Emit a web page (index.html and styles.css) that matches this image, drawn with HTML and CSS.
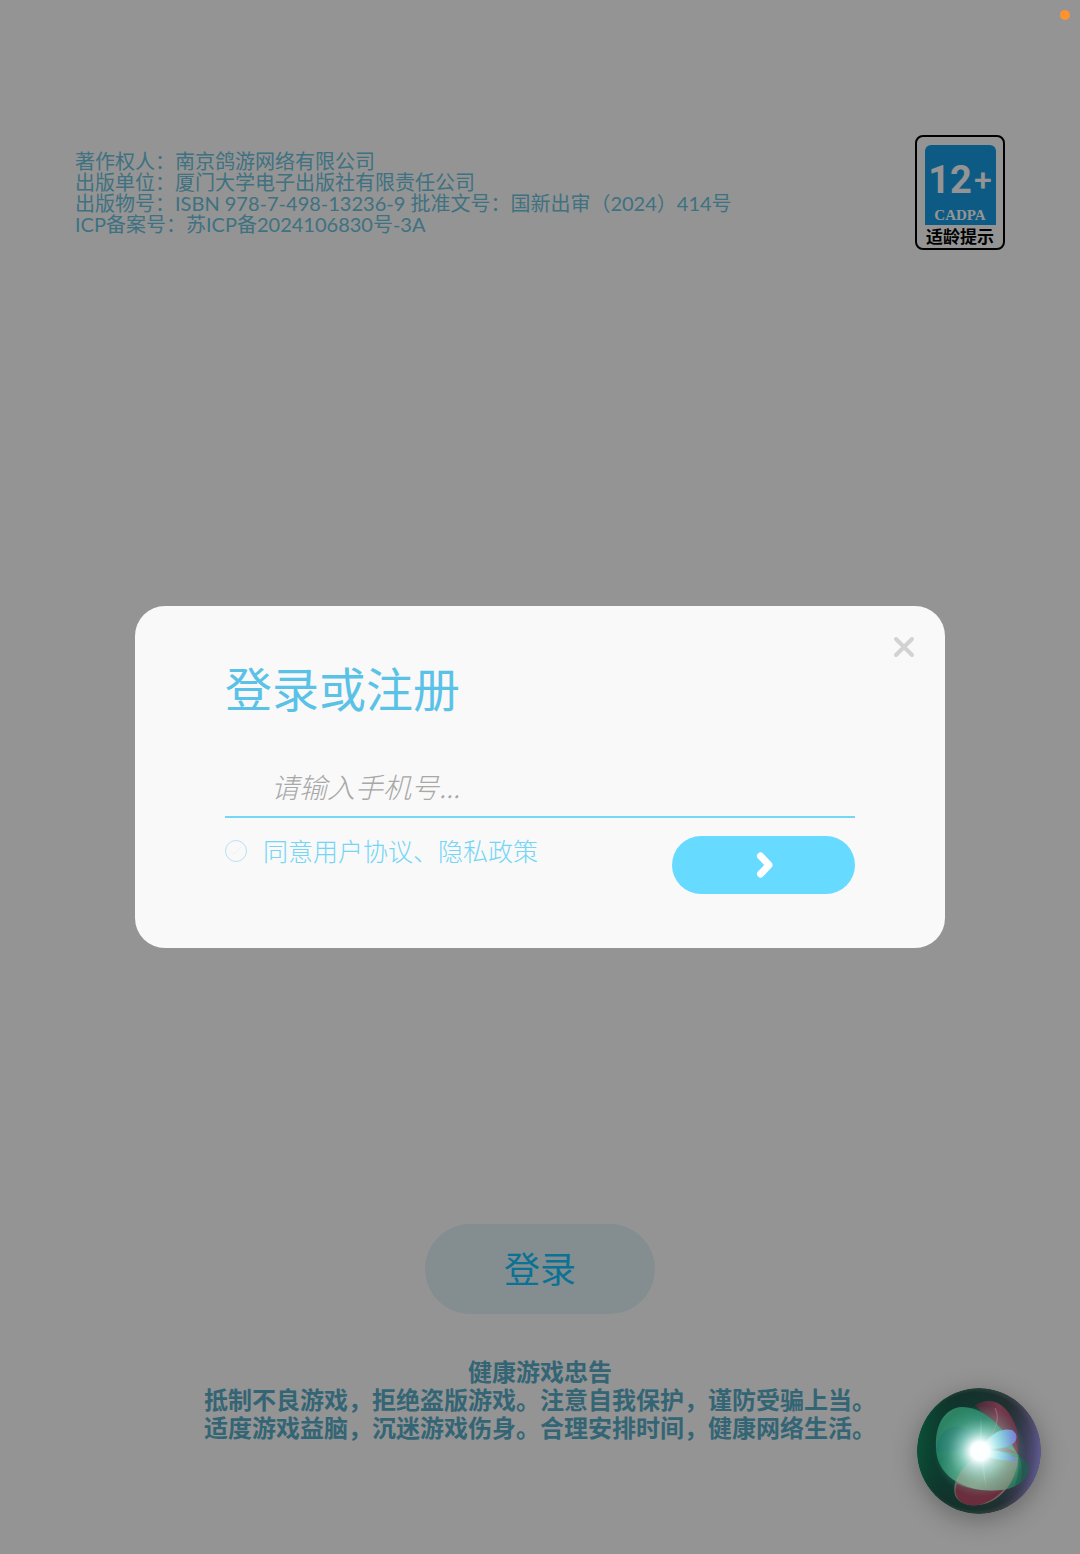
FILE: index.html
```html
<!DOCTYPE html>
<html lang="zh-CN">
<head>
    <meta charset="UTF-8">
    <meta name="viewport" content="width=device-width, initial-scale=1.0">
    <title>登录或注册</title>
    <link rel="stylesheet" href="styles.css">
</head>
<body>
    <div class="page">
        <header class="top">
            <p class="copyright">
                著作权人：南京鸽游网络有限公司<br>
                出版单位：厦门大学电子出版社有限责任公司<br>
                出版物号：ISBN 978-7-498-13236-9 批准文号：国新出审（2024）414号<br>
                ICP备案号：苏ICP备2024106830号-3A
            </p>
            <button type="button" class="age-badge">
                <span class="age-box">
                    <span class="age-number">12<span class="age-plus">+</span></span>
                    <span class="age-org">CADPA</span>
                </span>
                <span class="age-label">适龄提示</span>
            </button>
        </header>

        <footer class="bottom">
            <button type="button" class="login-btn">登录</button>
            <p class="notice">
                健康游戏忠告<br>
                抵制不良游戏，拒绝盗版游戏。注意自我保护，谨防受骗上当。<br>
                适度游戏益脑，沉迷游戏伤身。合理安排时间，健康网络生活。
            </p>
        </footer>
    </div>

    <div class="overlay">
        <form class="dialog" role="dialog" aria-labelledby="dialogTitle">
            <button type="button" class="close-btn" aria-label="关闭">
                <svg width="22" height="22" viewBox="0 0 22 22">
                    <path d="M3 3L19 19M19 3L3 19" fill="none" stroke="#d2d2d2" stroke-width="4" stroke-linecap="round"/>
                </svg>
            </button>
            <h1 id="dialogTitle">登录或注册</h1>
            <input type="tel" id="phone" class="phone" placeholder="请输入手机号..." aria-label="手机号">
            <div class="form-row">
                <div class="agree">
                    <span class="check">
                        <input type="checkbox" id="agree">
                        <svg width="12" height="10" viewBox="0 0 12 10">
                            <path d="M1 5L4 8L11 1" fill="none" stroke="#edf2f4" stroke-width="1"/>
                        </svg>
                    </span>
                    <label for="agree">同意用户协议、隐私政策</label>
                </div>
                <button type="submit" class="next-btn" aria-label="下一步">
                    <svg width="18" height="28" viewBox="0 0 18 28">
                        <path d="M5.5 5L14 14L5.5 23" fill="none" stroke="#fff" stroke-width="7" stroke-linecap="round" stroke-linejoin="round"/>
                    </svg>
                </button>
            </div>
        </form>
    </div>

    <span class="mic-dot"></span>

    <!-- voice assistant orb -->
    <svg class="orb" width="124" height="126" viewBox="0 0 124 126">
        <defs>
            <radialGradient id="ball" cx="48%" cy="50%" r="54%">
                <stop offset="0" stop-color="#175846"/>
                <stop offset="0.6" stop-color="#0f382f"/>
                <stop offset="0.86" stop-color="#14302a"/>
                <stop offset="1" stop-color="#42584e"/>
            </radialGradient>
            <linearGradient id="rim" x1="0" y1="0.4" x2="1" y2="0.5">
                <stop offset="0" stop-color="#075a3a" stop-opacity="0.8"/>
                <stop offset="0.3" stop-color="#083a2b" stop-opacity="0.1"/>
                <stop offset="0.7" stop-color="#4a2c45" stop-opacity="0.25"/>
                <stop offset="1" stop-color="#625b98" stop-opacity="0.9"/>
            </linearGradient>
            <linearGradient id="green" x1="0" y1="0" x2="1" y2="1">
                <stop offset="0" stop-color="#3a916c"/>
                <stop offset="0.35" stop-color="#1d7c5e"/>
                <stop offset="0.7" stop-color="#5cae85"/>
                <stop offset="1" stop-color="#1c6650"/>
            </linearGradient>
            <linearGradient id="red" x1="0" y1="0" x2="1" y2="0.4">
                <stop offset="0" stop-color="#4a2634"/>
                <stop offset="0.5" stop-color="#853a51"/>
                <stop offset="1" stop-color="#6f2d43"/>
            </linearGradient>
            <radialGradient id="glow">
                <stop offset="0" stop-color="#fff"/>
                <stop offset="0.2" stop-color="#faffff"/>
                <stop offset="0.42" stop-color="#bdf3ee" stop-opacity="0.65"/>
                <stop offset="0.7" stop-color="#8fdccb" stop-opacity="0.25"/>
                <stop offset="1" stop-color="#6ad0b8" stop-opacity="0"/>
            </radialGradient>
            <linearGradient id="blue" x1="0" y1="0" x2="1" y2="0">
                <stop offset="0" stop-color="#d5ffff"/>
                <stop offset="0.6" stop-color="#75b4de"/>
                <stop offset="1" stop-color="#7770d8"/>
            </linearGradient>
        </defs>
        <ellipse cx="62" cy="63" rx="62" ry="63" fill="url(#ball)"/>
        <ellipse cx="62" cy="63" rx="62" ry="63" fill="url(#rim)"/>
        <path d="M58 17C80 4 96 24 101 46C103 62 101 80 91 94C79 80 77 60 72 48C69 36 66 23 58 17Z" fill="url(#red)" opacity="0.85"/>
        <path d="M19 59C18 36 28 20 45 19C65 19 82 35 93 53C103 66 108 80 103 94C96 102 81 104 64 102C39 98 19 84 19 59Z" fill="url(#green)" opacity="0.92"/>
        <path d="M83 37C97 45 101 55 101 68C99 64 94 54 83 37Z" fill="#8a3850" opacity="0.8"/>
        <path d="M101 68C108 71 112 75 112 83C109 91 105 96 98 98C101 88 102 79 101 68Z" fill="#1d624d" opacity="0.7"/>
        <path d="M61 65C46 79 34 92 38 107C43 119 61 120 75 113C92 104 100 86 101 70C88 66 73 64 61 65Z" fill="#b9928a" opacity="0.5"/>
        <path d="M40 96C34 110 47 120 62 117C73 114 81 108 86 102C70 104 54 102 40 96Z" fill="#6b2538" opacity="0.85"/>
        <path d="M29 42C42 32 57 45 66 58C48 62 29 62 20 65C19 55 23 46 29 42Z" fill="#176b68" opacity="0.45"/>
        <path d="M78 20C83 31 80 42 65 58" fill="none" stroke="#d58b96" stroke-width="1" opacity="0.5"/>
        <path d="M62 62C72 48 82 39 95 42C103 47 101 58 84 60Z" fill="url(#blue)"/>
        <path d="M66 62C80 62 93 64 101 73C88 73 77 71 66 68Z" fill="url(#blue)"/>
        <path d="M78 62C88 59 94 60 100 66Z" fill="#9b6478"/>
        <path d="M64 28L66 60L69 100L62 64Z" fill="#fff" opacity="0.2"/>
        <circle cx="63" cy="63" r="46" fill="url(#glow)"/>
    </svg>
</body>
</html>
```

FILE: styles.css
```css
* {
    box-sizing: border-box;
}

body {
    margin: 0;
    font-family: Lato, "Noto Sans CJK SC", sans-serif;
    background-color: #fff;
}

button {
    border: none;
    padding: 0;
    font-family: inherit;
    cursor: pointer;
}

.page {
    display: flex;
    flex-direction: column;
    justify-content: space-between;
    min-height: 100vh;
    padding: 135px 75px 112px;
}

.top {
    display: flex;
    justify-content: space-between;
    align-items: flex-start;
}

.copyright {
    margin: 16px 0 0;
    font-size: 20px;
    line-height: 21px;
    color: #6cc4de;
}

.age-badge {
    display: flex;
    flex-direction: column;
    align-items: center;
    width: 90px;
    height: 115px;
    padding: 8px 7px 0;
    background-color: #fff;
    border: 2px solid #000;
    border-radius: 8px;
}

.age-box {
    display: flex;
    flex-direction: column;
    align-items: center;
    width: 71px;
    height: 80px;
    padding-top: 14px;
    background-color: #189ee4;
    border-radius: 6px 6px 0 0;
    color: #fff;
}

.age-number {
    display: flex;
    gap: 2px;
    font-family: Roboto, sans-serif;
    font-size: 38px;
    font-weight: bold;
    line-height: 42px;
}

.age-plus {
    font-size: 32px;
    font-weight: 500;
}

.age-org {
    font-family: "Liberation Serif", serif;
    font-size: 15px;
    font-weight: bold;
    line-height: 28px;
}

.age-label {
    font-size: 17px;
    font-weight: bold;
    line-height: 24px;
    color: #000;
    white-space: nowrap;
}

.bottom {
    display: flex;
    flex-direction: column;
    align-items: center;
    gap: 44px;
}

.login-btn {
    width: 230px;
    height: 90px;
    padding-bottom: 4px;
    border-radius: 45px;
    background-color: #e4f5f9;
    font-size: 36px;
    color: #12c4ff;
}

.notice {
    margin: 0;
    font-size: 24px;
    font-weight: bold;
    line-height: 28px;
    text-align: center;
    color: #58aeca;
}

.overlay {
    position: fixed;
    inset: 0;
    display: flex;
    justify-content: center;
    align-items: center;
    background-color: rgba(0, 0, 0, 0.42);
}

.dialog {
    position: relative;
    width: 75%;
    padding: 58px 90px 54px;
    background-color: #f9f9f9;
    border-radius: 30px;
}

.dialog h1 {
    margin: 0;
    font-size: 47px;
    font-weight: normal;
    line-height: 50px;
    color: #5bc2e7;
}

.close-btn {
    position: absolute;
    top: 30px;
    right: 30px;
    width: 22px;
    height: 22px;
    background: none;
}

.close-btn svg {
    display: block;
}

.phone {
    display: block;
    width: 100%;
    height: 62px;
    margin-top: 42px;
    padding: 0 46px;
    border: none;
    border-bottom: 2px solid #76d6f6;
    outline: none;
    background: none;
    font-family: "Noto Sans CJK SC", sans-serif;
    font-size: 28px;
    font-style: italic;
    font-weight: 300;
}

.phone::placeholder {
    color: #a8a8a8;
}

.form-row {
    display: flex;
    justify-content: space-between;
    align-items: flex-start;
    margin-top: 18px;
}

.agree {
    display: flex;
    align-items: center;
    gap: 16px;
    font-size: 25px;
    font-weight: 300;
    line-height: 30px;
    color: #74d5f6;
}

.check {
    display: grid;
    place-items: center;
}

.check input,
.check svg {
    grid-area: 1 / 1;
}

.check input {
    appearance: none;
    width: 22px;
    height: 22px;
    margin: 0;
    border: 1px solid #b5e3f4;
    border-radius: 50%;
}

.check svg {
    pointer-events: none;
}

.next-btn {
    display: flex;
    justify-content: center;
    align-items: center;
    width: 183px;
    height: 58px;
    border-radius: 29px;
    background-color: #66daff;
}

.mic-dot {
    position: fixed;
    top: 10px;
    right: 10px;
    width: 10px;
    height: 10px;
    border-radius: 50%;
    background-color: #ff9230;
}

.orb {
    position: fixed;
    right: 39px;
    bottom: 40px;
    border-radius: 50%;
    box-shadow: 0 6px 24px rgba(40, 40, 40, 0.4);
}
```
